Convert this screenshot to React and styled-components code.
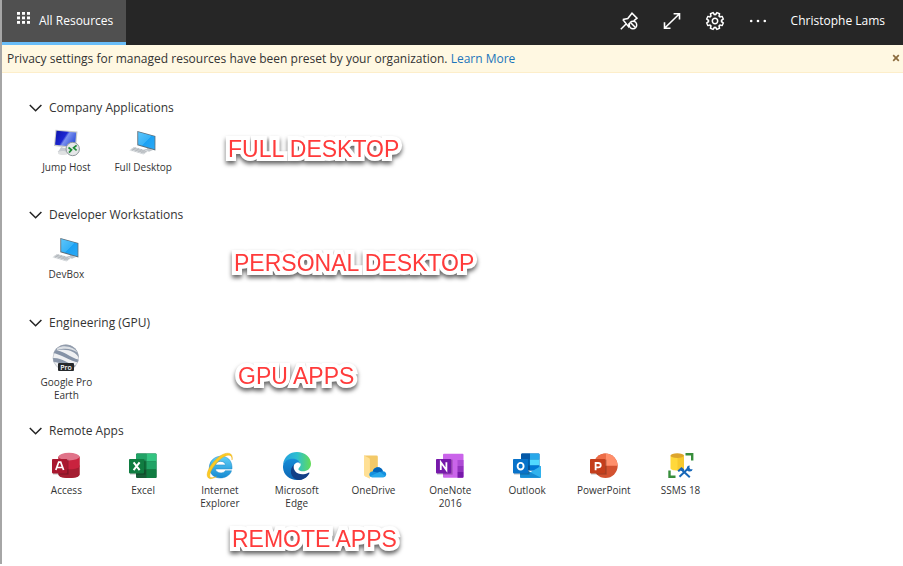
import React, { useState } from "react";
import styled, { createGlobalStyle } from "styled-components";

const Global = createGlobalStyle`
  * { box-sizing: border-box; }
  body { margin: 0; background: #fff; }
  button { border: 0; background: none; padding: 0; font: inherit; color: inherit; cursor: pointer; }
`;

const Page = styled.div`
  min-height: calc(100vh - 2px);
  border-left: 2px solid #a6a6a6;
  font-family: "Open Sans", "Segoe UI", sans-serif;
  font-size: 12px;
  line-height: 18px;
  color: #333;
`;

const TopBar = styled.header`
  display: flex;
  justify-content: space-between;
  height: 45px;
  background: #262626;
  color: #fff;
`;

const Tab = styled.button`
  display: flex;
  align-items: center;
  gap: 9px;
  padding: 0 13px 0 15px;
  background: #505050;
  border-bottom: 3px solid #69bdf8;

  svg { margin-bottom: 6px; }
`;

const Tools = styled.nav`
  display: flex;
  align-items: center;
  gap: 23px;
  padding: 0 18px 3px 0;
`;

const ToolButton = styled.button`
  display: flex;
`;

const UserButton = styled.button`
  white-space: nowrap;
`;

const Banner = styled.div`
  display: flex;
  justify-content: space-between;
  height: 28px;
  padding: 5px 3px 0 5px;
  background: #fff8e2;
  border-bottom: 1px solid #fdeeca;
`;

const BannerText = styled.p`
  margin: 0;

  a { color: #1b75bb; text-decoration: none; }
`;

const Dismiss = styled.button`
  align-self: flex-start;
  display: flex;
  padding: 4px 0;
`;

const Main = styled.main`
  padding: 25px 26px 0;
`;

const Section = styled.section`
  position: relative;
  min-height: ${(p) => (p.$short ? "107px" : "108px")};
`;

const Heading = styled.h2`
  margin: 0;
  font-size: 12px;
  font-weight: 400;

  button { display: flex; align-items: center; gap: 6px; height: 20px; }
`;

const Tiles = styled.div`
  display: grid;
  grid-template-columns: repeat(9, minmax(0, 1fr));
  max-width: 691px;
  margin-top: 11px;
`;

const Tile = styled.button`
  display: flex;
  flex-direction: column;
  align-items: center;
  gap: 4px;
  font-size: 10px;
  line-height: 13px;
`;

const TileLabel = styled.span`
  max-width: 64px;
`;

const Callout = styled.strong`
  position: absolute;
  left: ${(p) => p.$left}px;
  top: ${(p) => p.$top}px;
  font: 400 23px/26px "Liberation Sans", Arial, sans-serif;
  white-space: nowrap;
  color: #ff3b3b;
  -webkit-text-stroke: 8px #fff;
  paint-order: stroke fill;
  stroke-linejoin: round;
  filter: drop-shadow(0 3px 2px rgba(0, 0, 0, 0.6));
  pointer-events: none;
`;

const Art = ({ children }) => (
  <svg width="28" height="28" viewBox="0 0 28 28" aria-hidden="true">{children}</svg>
);

const Badge = ({ color, children }) => (
  <>
    <rect x="1" y="7.6" width="15.6" height="15" fill="#000" opacity=".22" />
    <rect x="0" y="7" width="15.2" height="14.4" rx=".8" fill={color} />
    {children}
  </>
);

const JumpHostIcon = () => (
  <Art>
    <defs>
      <linearGradient id="jh" x1="0" y1="0" x2="1" y2=".5">
        <stop offset="0" stopColor="#0d13a8" />
        <stop offset=".5" stopColor="#1d27d2" />
        <stop offset=".6" stopColor="#7c92ee" />
        <stop offset="1" stopColor="#3555dc" />
      </linearGradient>
    </defs>
    <path d="M9 18l7 2v4l-9-.5c-2-.5-1-1.600 0-2z" fill="#c6cbd0" />
    <path d="M6 22.800c3-1.500 8-1 10 .6l-1 2.200c-3 .8-8 .3-9-1.200z" fill="#dfe1e2" />
    <path d="M3.500.8L25.500 2.500 24 19.600 2 17z" fill="#c9ccc9" />
    <path d="M4.500 1.800L24.200 3.400 22.900 18 3.100 15.700z" fill="url(#jh)" />
    <circle cx="20.700" cy="20" r="6.700" fill="#e5e7e8" stroke="#8f969b" />
    <path d="M16.500 18.500l3 2.300-2.500 2.800M24.600 16.400l-3 2.400 3 2.500" fill="none" stroke="#1d8a35" strokeWidth="1.700" />
  </Art>
);

const DesktopIcon = () => (
  <Art>
    <defs>
      <linearGradient id="dt" x1="0" y1="0" x2="1" y2="1">
        <stop offset="0" stopColor="#5cc5fb" />
        <stop offset=".5" stopColor="#38b2f7" />
        <stop offset=".52" stopColor="#1ba1f3" />
        <stop offset="1" stopColor="#2ba9f5" />
      </linearGradient>
    </defs>
    <path d="M18 17l3 1v2l3 1-4 1.700-5-2.200 3-.8z" fill="#c0c7cc" />
    <path d="M8.300 2L26.400 6.900V21.600L8.300 16.200z" fill="#5c6d79" />
    <path d="M9.200 3.100L25.600 7.500V20.300L9.200 15.500z" fill="url(#dt)" />
    <path d="M5.200 17.900L19.300 21.700 14.600 25.500.4 21.200z" fill="#d5d9dc" />
    <path d="M4 19l13.500 3.700M2.600 20l13.500 3.800M7 18.500l-4.200 3.300M10 19.300l-4.200 3.300M13 20.100l-4.200 3.300M16 20.900l-4.200 3.300" stroke="#a9afb4" strokeWidth=".6" />
  </Art>
);

const EarthIcon = () => (
  <Art>
    <clipPath id="ec"><circle cx="13.800" cy="13.500" r="13" /></clipPath>
    <g clipPath="url(#ec)">
      <rect width="28" height="28" fill="#eff0f2" />
      <path d="M2 4C10-2 22-1 26 7c1 3 1 5 1 7C23 7 15 4 2 7z" fill="#8c98aa" />
      <path d="M5 4c9-4 18 0 21 5-7-5-13-5-21-3z" fill="#dce0e5" />
      <path d="M1 6c11 0 17 8 27 10v3C17 17 10 10 0 9z" fill="#8592a6" />
      <path d="M0 14c10-1 15 6 26 8l-2 5C15 24 11 18 0 18z" fill="#8a96a9" />
    </g>
    <circle cx="13.800" cy="13.500" r="12.700" fill="none" stroke="#a3a9b2" strokeWidth=".5" />
    <rect x="6" y="19" width="16" height="8" rx="1" fill="#25282b" />
    <text x="14" y="25.500" textAnchor="middle" fontFamily="Open Sans, sans-serif" fontSize="7" fontWeight="600" fill="#fff">Pro</text>
  </Art>
);

const AccessIcon = () => (
  <Art>
    <path d="M6.500 4.500v18c0 4.800 21 4.800 21 0v-18z" fill="#a4262c" />
    <path d="M6.500 13v9.500c0 4.800 21 4.800 21 0V13c-2 4-18 4-21 0z" fill="#a51d31" />
    <path d="M6.500 4.700v10c3 3.500 18 3.500 21 0v-10z" fill="#c9233e" />
    <ellipse cx="17" cy="4.600" rx="10.500" ry="3.800" fill="#e07389" />
    <Badge color="#a9182f">
      <path d="M3.800 18L6.700 10.200h2L11.600 18M5.200 15.500h5" fill="none" stroke="#fff" strokeWidth="1.700" />
    </Badge>
  </Art>
);

const ExcelIcon = () => (
  <Art>
    <rect x="7" y="1.500" width="20.500" height="24.500" rx="1" fill="#185c37" />
    <path d="M8 1.500h9.500v8H7v-7z" fill="#21a366" />
    <path d="M17.500 1.500h9q1 0 1 1v7h-10z" fill="#33c481" />
    <path d="M7 9.500h10.500v8H7z" fill="#107c41" />
    <path d="M17.500 9.500h10v8h-10z" fill="#21a366" />
    <path d="M17.500 17.500h10v7.500q0 1-1 1h-9z" fill="#107c41" />
    <Badge color="#107c41">
      <path d="M4.600 10.300l6 7.800M10.600 10.300l-6 7.800" stroke="#fff" strokeWidth="2" />
    </Badge>
  </Art>
);

const ExplorerIcon = () => (
  <Art>
    <defs>
      <linearGradient id="ie" x1="0" y1="0" x2="0" y2="1">
        <stop offset="0" stopColor="#5fd0f7" />
        <stop offset="1" stopColor="#168ad2" />
      </linearGradient>
    </defs>
    <path fillRule="evenodd" d="M26 17H9.500c.4 4.400 8 5.300 9.800 1.700H25.500C23 28 5 29.500 3.300 16.500 2.500 1.300 25.500-.5 26 14.800zM9.500 12.900h10c-.4-4.700-9.200-4.700-10 0z" fill="url(#ie)" stroke="#1c89c9" strokeWidth=".5" />
    <path d="M26 8C28-1.500 18 0 11.500 6 4 12.500-1.500 23 2.500 26c2.200 1.500 5.500.1 8-1.400-3.500 1.400-6 1.600-6.600-.1C3 20.500 8 13 14 7.500 20 2.200 26.500 1 26 8z" fill="#fbcb25" stroke="#e8a90d" strokeWidth=".4" />
  </Art>
);

const EdgeIcon = () => (
  <Art>
    <defs>
      <linearGradient id="ea" x1="0" y1=".5" x2="1" y2=".5">
        <stop offset="0" stopColor="#249fdf" />
        <stop offset=".5" stopColor="#2dbfd0" />
        <stop offset="1" stopColor="#63dc56" />
      </linearGradient>
      <linearGradient id="eb" x1="0" y1="0" x2="0" y2="1">
        <stop offset="0" stopColor="#168dd8" />
        <stop offset="1" stopColor="#0c65b3" />
      </linearGradient>
    </defs>
    <path d="M0 13C1 4 7 0 14 0c8 0 14 5.500 14 11.800 0 5-4 7.500-8 7.500-4 0-5.300-1.800-4.200-3 1.700-2 2.300-3.300 1.600-5C15 6 4 6 0 13z" fill="url(#ea)" />
    <path d="M0 14C1 5.500 15.500 4 17.400 12c-2.300-4-9 0-7 7 2 7 10 8 15 3.500C22 27 18 28 14 28 6 28-.5 22 0 14z" fill="url(#eb)" />
    <path d="M10.900 12.500C6 17 7 26.500 15 28c5 0 9-2.500 11.300-6.600.4-.8-.3-1-.8-.7C17 25 9 20 10.900 12.500z" fill="#123f87" />
  </Art>
);

const OneDriveIcon = () => (
  <Art>
    <path d="M5 3.500h12.500q1.300 0 1.300 1.300V24.500H9z" fill="#f3c968" />
    <path d="M5 3.500l5 2.600q.9.500.9 1.600V26.700L5.900 24.300Q5 23.800 5 22.700z" fill="#ffe095" />
    <path d="M12.900 25.200c-4.100-.7-3-6 .8-5.800 1.600-5.600 9-5.300 10.200-.2 4.500.1 4.300 6 .2 6z" fill="#1490df" />
    <path d="M13.700 19.400c1.600-5.600 9-5.300 10.200-.2-2 .1-3 .9-3.600 1.900z" fill="#0364b8" />
    <path d="M11.200 24.300l9.500-4.600 5.700 4.600q-1 .9-2.300.9H12.900z" fill="#28a8ea" />
  </Art>
);

const OneNoteIcon = () => (
  <Art>
    <rect x="7" y="1.800" width="20.500" height="24" rx="1" fill="#ca64ea" />
    <path d="M21.500 8h6v6h-6z" fill="#ae4bd5" />
    <path d="M21.500 14h6v6h-6z" fill="#9332bf" />
    <path d="M21.500 20h6v4.800q0 1-1 1h-5z" fill="#7719aa" />
    <Badge color="#7719aa">
      <path d="M4.800 18v-7.700l5.600 7.700v-7.700" fill="none" stroke="#fff" strokeWidth="1.800" />
    </Badge>
  </Art>
);

const OutlookIcon = () => (
  <Art>
    <path d="M8 2.500q0-1 1-1h16.500q1 0 1 1v16H8z" fill="#0a5fae" />
    <path d="M9 1.500h8v6H8v-5z" fill="#0358a7" />
    <path d="M17 1.500h8.500q1 0 1 1v5H17z" fill="#28a8ea" />
    <path d="M8 7.500h9v6H8z" fill="#0078d4" />
    <path d="M17 7.500h9.500v6H17z" fill="#50d9ff" />
    <path d="M17 13.500h9.500v5H17z" fill="#0078d4" />
    <path d="M7 15l10.500 5.500L28 14v10.800q0 1-1 1H8q-1 0-1-1z" fill="#1490df" />
    <path d="M28 14L8 25.800h19q1 0 1-1z" fill="#31b2ed" />
    <path d="M7 15l20.500 10.600q-.2.200-.8.200H8q-1 0-1-1z" fill="#168bd3" />
    <Badge color="#0872c9">
      <ellipse cx="7.600" cy="14.200" rx="3" ry="3.300" fill="none" stroke="#fff" strokeWidth="1.900" />
    </Badge>
  </Art>
);

const PowerPointIcon = () => (
  <Art>
    <circle cx="15.500" cy="13.800" r="12.200" fill="#d35230" />
    <path d="M15.500 1.600a12.200 12.200 0 0 1 12.200 12.200H15.500z" fill="#ff8f6b" />
    <path d="M15.500 1.600v12.200H3.300A12.200 12.200 0 0 1 15.500 1.600z" fill="#ed6c47" />
    <Badge color="#c43e1c">
      <path d="M5.600 18.200V11h2.600c3.400 0 3.400 4.300 0 4.300H5.600" fill="none" stroke="#fff" strokeWidth="1.800" />
    </Badge>
  </Art>
);

const SsmsIcon = () => (
  <Art>
    <path d="M18.500 2.200h6.700V8.500M2.500 18.500v6.300h6" fill="none" stroke="#388e3c" strokeWidth="2.400" />
    <path d="M3.500 3.700v12.600c0 3 13.500 3 13.500 0V3.700z" fill="#ffd83b" />
    <path d="M10.500 5h6.500v11.300c0 1.500-3 2.200-6.500 2.200z" fill="#f7c92e" />
    <ellipse cx="10.250" cy="3.600" rx="6.750" ry="2.400" fill="#dda52c" />
    <path d="M13.500 18.500l9 6M13 24.500l8.500-8" stroke="#fff" strokeWidth="4.500" />
    <path d="M14.500 17.500l8.300 7.700M12.500 24.700l8.800-8.400" stroke="#1767b8" strokeWidth="2" />
    <path d="M10.500 18.500l4-3.500 2.800 2.500-1.500 2-2-1-2 1.500z" fill="#1767b8" />
    <path d="M22.700 13.600a3 3 0 1 0 3 3.700l-2.300-.1-1-1.500z" fill="#1767b8" />
  </Art>
);

const GridIcon = () => (
  <svg width="13" height="12" viewBox="0 0 13 12" fill="#fff" aria-hidden="true">
    {[0, 5, 10].map((x) => [0, 4.5, 9].map((y) => <rect key={`${x}-${y}`} x={x} y={y} width="3" height="2.800" />))}
  </svg>
);

const UnpinIcon = () => (
  <svg width="20" height="20" viewBox="0 0 20 20" fill="none" stroke="#fff" strokeWidth="1.500" aria-hidden="true">
    <path d="M1.800 18.200l5-5M3.800 8.500l5.700 7.100.7-3.500M3.800 8.500l5-1L13 2.200l5 5-3.300 2.600" />
    <circle cx="14" cy="14" r="3.700" />
    <path d="M11.500 11.500l5 5" />
  </svg>
);

const ExpandIcon = () => (
  <svg width="20" height="20" viewBox="0 0 20 20" fill="none" stroke="#fff" strokeWidth="1.600" aria-hidden="true">
    <path d="M2.800 17L17.200 3M11.600 2.700h5.900v5.900M2.500 11.200v6h6" />
  </svg>
);

const gearTeeth = [0, 45, 90, 135, 180, 225, 270, 315];

const GearIcon = () => (
  <svg width="20" height="20" viewBox="-10 -10 20 20" aria-hidden="true">
    <g fill="#fff">
      <circle r="7.300" />
      {gearTeeth.map((a) => <path key={a} d="M-2.600-6.500l.6-2.600h4l.6 2.600z" transform={`rotate(${a + 22.5})`} />)}
    </g>
    <g fill="#262626">
      <circle r="5.800" />
      {gearTeeth.map((a) => <path key={a} d="M-1.200-5l.4-2.700h1.600l.4 2.700z" transform={`rotate(${a + 22.5})`} />)}
    </g>
    <circle r="2.700" fill="none" stroke="#fff" strokeWidth="1.500" />
  </svg>
);

const MoreIcon = () => (
  <svg width="20" height="20" viewBox="0 0 20 20" fill="#fff" aria-hidden="true">
    <circle cx="3.200" cy="10" r="1.300" /><circle cx="10" cy="10" r="1.300" /><circle cx="16.800" cy="10" r="1.300" />
  </svg>
);

const CloseIcon = () => (
  <svg width="8" height="8" viewBox="0 0 8 8" stroke="#8b6b3d" strokeWidth="1.700" aria-hidden="true">
    <path d="M1.200 1.200l5.600 5.600M6.800 1.200L1.200 6.800" />
  </svg>
);

const ChevronIcon = ({ open }) => (
  <svg width="15" height="10" viewBox="0 0 15 10" fill="none" stroke="#222" strokeWidth="1.500" aria-hidden="true">
    <path d={open ? "M1.800 2l5.800 5.800L13.400 2" : "M5 0l5 5-5 5"} />
  </svg>
);

const tools = [
  { label: "Unpin toolbar", Icon: UnpinIcon },
  { label: "Full screen", Icon: ExpandIcon },
  { label: "Settings", Icon: GearIcon },
  { label: "More", Icon: MoreIcon },
];

const groups = [
  {
    title: "Company Applications",
    short: true,
    apps: [{ name: "Jump Host", Icon: JumpHostIcon }, { name: "Full Desktop", Icon: DesktopIcon }],
    note: { text: "FULL DESKTOP", left: 200, top: 38 },
  },
  {
    title: "Developer Workstations",
    apps: [{ name: "DevBox", Icon: DesktopIcon }],
    note: { text: "PERSONAL DESKTOP", left: 206, top: 45 },
  },
  {
    title: "Engineering (GPU)",
    apps: [{ name: "Google Pro Earth", Icon: EarthIcon }],
    note: { text: "GPU APPS", left: 210, top: 50 },
  },
  {
    title: "Remote Apps",
    apps: [
      { name: "Access", Icon: AccessIcon },
      { name: "Excel", Icon: ExcelIcon },
      { name: "Internet Explorer", Icon: ExplorerIcon },
      { name: "Microsoft Edge", Icon: EdgeIcon },
      { name: "OneDrive", Icon: OneDriveIcon },
      { name: "OneNote 2016", Icon: OneNoteIcon },
      { name: "Outlook", Icon: OutlookIcon },
      { name: "PowerPoint", Icon: PowerPointIcon },
      { name: "SSMS 18", Icon: SsmsIcon },
    ],
    note: { text: "REMOTE APPS", left: 204, top: 105 },
  },
];

function Group({ title, short, apps, note }) {
  const [open, setOpen] = useState(true);
  return (
    <Section $short={short}>
      <Heading>
        <button aria-expanded={open} onClick={() => setOpen(!open)}>
          <ChevronIcon open={open} />
          {title}
        </button>
      </Heading>
      {open && (
        <Tiles>
          {apps.map(({ name, Icon }) => (
            <Tile key={name}>
              <Icon />
              <TileLabel>{name}</TileLabel>
            </Tile>
          ))}
        </Tiles>
      )}
      <Callout $left={note.left} $top={note.top}>{note.text}</Callout>
    </Section>
  );
}

export default function App() {
  const [showBanner, setShowBanner] = useState(true);
  return (
    <>
      <Global />
      <Page>
        <TopBar>
          <Tab>
            <GridIcon />
            All Resources
          </Tab>
          <Tools>
            {tools.map(({ label, Icon }) => (
              <ToolButton key={label} aria-label={label}><Icon /></ToolButton>
            ))}
            <UserButton>Christophe Lams</UserButton>
          </Tools>
        </TopBar>
        {showBanner && (
          <Banner>
            <BannerText>
              Privacy settings for managed resources have been preset by your organization.{" "}
              <a href="#learn-more">Learn More</a>
            </BannerText>
            <Dismiss aria-label="Dismiss" onClick={() => setShowBanner(false)}><CloseIcon /></Dismiss>
          </Banner>
        )}
        <Main>
          {groups.map((group) => <Group key={group.title} {...group} />)}
        </Main>
      </Page>
    </>
  );
}
